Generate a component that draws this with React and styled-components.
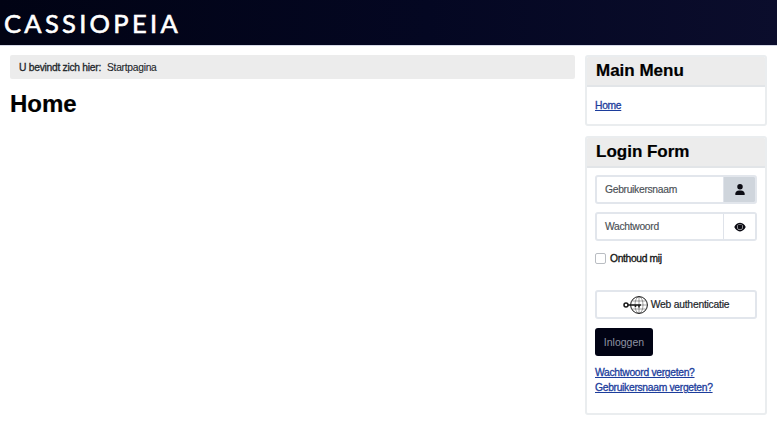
import React from "react";
import styled, { createGlobalStyle } from "styled-components";

const GlobalStyle = createGlobalStyle`
  html, body {
    margin: 0;
    padding: 0;
    background: #fff;
    font-family: "Liberation Sans", Arial, sans-serif;
    color: #22262a;
  }
  * { box-sizing: border-box; }
`;

const Page = styled.div`
  width: 777px;
  height: 423px;
  overflow: hidden;
`;

const Header = styled.header`
  height: 46px;
  padding-left: 4px;
  display: flex;
  align-items: center;
  background: linear-gradient(90deg, #010314 0%, #040722 55%, #0b0d2c 100%);
  border-bottom: 1px solid #d5d8e6;
`;

const Logo = styled.div`
  font-family: Lato, sans-serif;
  font-size: 25.5px;
  font-weight: 400;
  letter-spacing: 3.3px;
  color: #fff;
  line-height: 1;
  margin-top: 3px;
  -webkit-text-stroke: 0.6px #fff;
`;

const Layout = styled.div`
  display: grid;
  grid-template-columns: 565px 182px;
  gap: 10px;
  padding: 9px 10px 0;
`;

const Breadcrumbs = styled.nav`
  height: 24px;
  padding-left: 9px;
  display: flex;
  align-items: center;
  gap: 6px;
  font-size: 10.3px;
  letter-spacing: -0.28px;
  background: #ececec;
  border-radius: 2px;
  color: #22262a;
`;

const Crumb = styled.span`
  -webkit-text-stroke: ${(p) => (p.$strong ? "0.3px" : "0.1px")};
`;

const PageTitle = styled.h1`
  margin: 12px 0 0;
  font-size: 24px;
  line-height: 26px;
  font-weight: 700;
  color: #000;
  -webkit-text-stroke: 0.2px #000;
`;

const Sidebar = styled.aside`
  display: flex;
  flex-direction: column;
  gap: 10px;
`;

const Card = styled.section`
  border: 2px solid #eaedef;
  border-radius: 3px;
  height: ${(p) => p.$height}px;
  overflow: hidden;
`;

const CardTitle = styled.h3`
  margin: 0;
  height: 30px;
  padding-left: 9px;
  display: flex;
  align-items: center;
  font-size: 17px;
  font-weight: 700;
  color: #000;
  background: #ececec;
  border-bottom: 2px solid #e2e5e8;
  -webkit-text-stroke: 0.2px #000;
`;

const CardBody = styled.div`
  padding: 7px 8px;
  display: flex;
  flex-direction: column;
`;

const Link = styled.a`
  font-size: 10.3px;
  letter-spacing: -0.3px;
  line-height: 15px;
  color: #1c3d9c;
  text-decoration: underline;
  -webkit-text-stroke: 0.3px #1c3d9c;
  cursor: pointer;
`;

const MenuBody = styled(CardBody)`
  padding-top: 11px;
`;

const InputGroup = styled.div`
  display: flex;
  height: 29px;
  margin-bottom: 8px;
  border: 2px solid #e2e6ec;
  border-radius: 3px;
  overflow: hidden;
`;

const InputText = styled.div`
  flex: 1;
  padding-left: 8px;
  display: flex;
  align-items: center;
  font-size: 10.3px;
  letter-spacing: -0.3px;
  color: #4a4f55;
  -webkit-text-stroke: 0.15px #4a4f55;
`;

const Addon = styled.div`
  width: 32px;
  display: flex;
  align-items: center;
  justify-content: center;
  border-left: 1px solid #dfe3ea;
  background: ${(p) => (p.$filled ? "#cfd5dc" : "#fff")};
  color: #0c0c14;
`;

const RememberRow = styled.label`
  display: flex;
  align-items: center;
  gap: 4px;
  height: 16px;
  margin-top: 1px;
  font-size: 10.3px;
  letter-spacing: -0.35px;
  color: #111;
  -webkit-text-stroke: 0.3px #111;
`;

const CheckBox = styled.span`
  width: 11px;
  height: 11px;
  border: 1px solid #b9bdc2;
  border-radius: 2px;
  background: #fff;
`;

const WebAuthButton = styled.button`
  height: 29px;
  margin-top: 24px;
  padding: 0;
  display: flex;
  align-items: center;
  justify-content: center;
  gap: 2px;
  font-family: inherit;
  font-size: 10.3px;
  letter-spacing: -0.22px;
  color: #22262a;
  -webkit-text-stroke: 0.2px #22262a;
  background: #fff;
  border: 2px solid #e2e6ec;
  border-radius: 3px;
`;

const SubmitButton = styled.button`
  align-self: flex-start;
  width: 58px;
  height: 28px;
  margin-top: 9px;
  padding: 0;
  font-family: inherit;
  font-size: 10.5px;
  color: #8f93a3;
  background: #010314;
  border: 0;
  border-radius: 3px;
`;

const LinkList = styled.div`
  display: flex;
  flex-direction: column;
  align-items: flex-start;
  margin-top: 9px;
`;

const UserIcon = () => (
  <svg width="10" height="11" viewBox="0 0 448 512" fill="currentColor">
    <path d="M224 256a128 128 0 1 0 0-256 128 128 0 1 0 0 256zm-45.7 48C79.8 304 0 383.8 0 482.3 0 498.7 13.3 512 29.7 512h388.6c16.4 0 29.7-13.3 29.7-29.7C448 383.8 368.2 304 269.7 304h-91.4z" />
  </svg>
);

const EyeIcon = () => (
  <svg width="12" height="10" viewBox="0 0 576 512" fill="currentColor">
    <path d="M288 32C207 32 142 69 95 113 48 156 17 208 2 244c-3 8-3 17 0 25 15 36 46 88 93 131 47 44 112 81 193 81s146-37 193-81c47-43 78-95 93-131 3-8 3-17 0-25-15-36-46-88-93-131C434 69 369 32 288 32zm0 368a144 144 0 1 1 0-288 144 144 0 1 1 0 288z" />
    <circle cx="288" cy="256" r="126" />
  </svg>
);

const WebAuthIcon = () => (
  <svg width="26" height="20" viewBox="0 0 26 20" fill="none" stroke="#1a1a1a">
    <circle cx="16" cy="10" r="8.4" strokeWidth="1" />
    <ellipse cx="16" cy="10" rx="4" ry="8.4" strokeWidth="0.4" />
    <path d="M7.6 10h16.8M8.8 6h14.4M8.8 14h14.4M16 1.6v16.8" strokeWidth="0.4" />
    <circle cx="3" cy="10" r="2" strokeWidth="1.5" />
    <path d="M5 10h13M12.5 10v2M16 10v2.5" strokeWidth="1.5" />
  </svg>
);

export default function App() {
  return (
    <Page>
      <GlobalStyle />
      <Header>
        <Logo>CASSIOPEIA</Logo>
      </Header>
      <Layout>
        <main>
          <Breadcrumbs>
            <Crumb $strong>U bevindt zich hier:</Crumb>
            <Crumb>Startpagina</Crumb>
          </Breadcrumbs>
          <PageTitle>Home</PageTitle>
        </main>
        <Sidebar>
          <Card $height={71}>
            <CardTitle>Main Menu</CardTitle>
            <MenuBody>
              <Link>Home</Link>
            </MenuBody>
          </Card>
          <Card $height={279}>
            <CardTitle>Login Form</CardTitle>
            <CardBody>
              <InputGroup>
                <InputText>Gebruikersnaam</InputText>
                <Addon $filled>
                  <UserIcon />
                </Addon>
              </InputGroup>
              <InputGroup>
                <InputText>Wachtwoord</InputText>
                <Addon>
                  <EyeIcon />
                </Addon>
              </InputGroup>
              <RememberRow>
                <CheckBox />
                Onthoud mij
              </RememberRow>
              <WebAuthButton>
                <WebAuthIcon />
                Web authenticatie
              </WebAuthButton>
              <SubmitButton>Inloggen</SubmitButton>
              <LinkList>
                <Link>Wachtwoord vergeten?</Link>
                <Link>Gebruikersnaam vergeten?</Link>
              </LinkList>
            </CardBody>
          </Card>
        </Sidebar>
      </Layout>
    </Page>
  );
}
